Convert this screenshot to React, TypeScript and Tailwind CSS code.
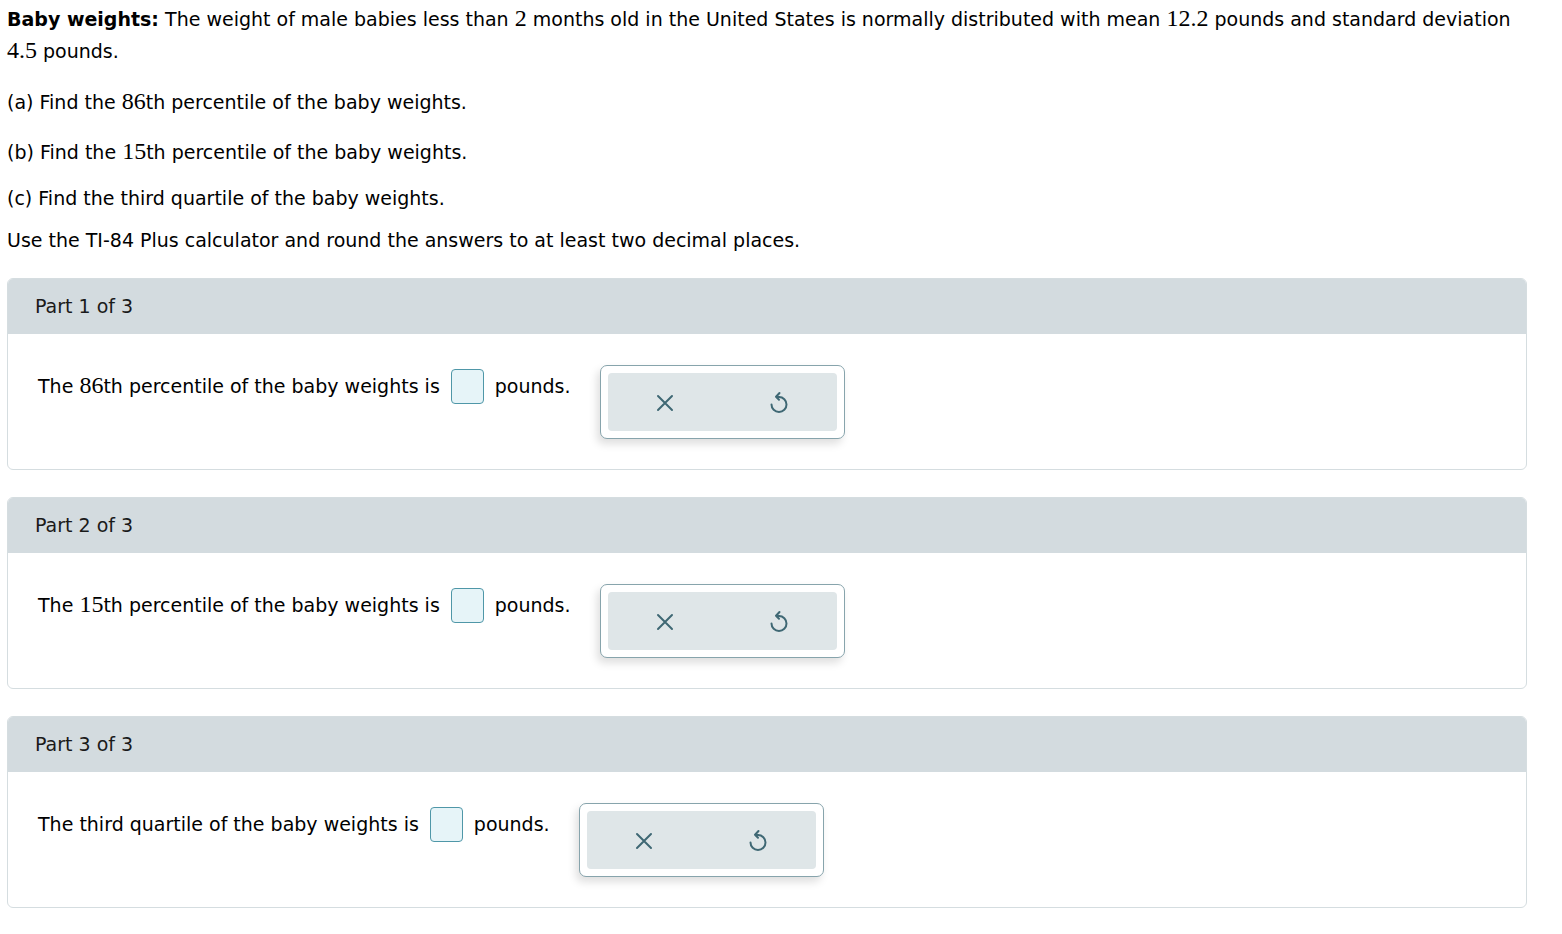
import React from "react";

function Num({ children }: { children: React.ReactNode }) {
  return <span className="font-[family-name:'Liberation_Serif',serif] text-[24px] leading-none">{children}</span>;
}

function XIcon() {
  return (
    <svg width="20" height="20" viewBox="0 0 20 20" fill="none" stroke="#3f6874" strokeWidth="2" strokeLinecap="round">
      <path d="M3 3 L17 17 M17 3 L3 17" />
    </svg>
  );
}

function UndoIcon() {
  return (
    <svg width="22" height="26" viewBox="0 0 22 26" fill="none" stroke="#3f6874" strokeWidth="2" strokeLinecap="round" strokeLinejoin="round">
      <path d="M11 8 A7.5 7.5 0 1 1 3.5 15.5" />
      <path d="M11 8 H8.5 M11.5 4 L8 7.8 L11 10.8" />
    </svg>
  );
}

function Part({ n, lead }: { n: number; lead: React.ReactNode }) {
  return (
    <div className="rounded-[6px] border border-[#d5dde0] overflow-hidden">
      <div className="h-[55px] bg-[#d3dbdf] flex items-center pl-[27px] text-[#1a1a1a]">
        Part {n} of 3
      </div>
      <div className="flex items-start pl-[30px] pt-[31px] pb-[30px]">
        <div className="flex items-center h-[42px] text-black whitespace-nowrap">
          <span>{lead}</span>
          <span className="mx-[11px] w-[33px] h-[35px] rounded-[4px] border-[1.5px] border-[#4f97a8] bg-[#e6f4f8]" />
          <span>pounds.</span>
        </div>
        <div className="ml-[29px] rounded-[7px] border border-[#87a4ac] bg-white p-[7px] shadow-[-3px_5px_8px_rgba(0,0,0,0.13)]">
          <div className="w-[229px] h-[58px] rounded-[4px] bg-[#dfe6e8] flex">
            <div className="flex-1 flex items-center justify-center pt-[2px]">
              <XIcon />
            </div>
            <div className="flex-1 flex items-center justify-center">
              <UndoIcon />
            </div>
          </div>
        </div>
      </div>
    </div>
  );
}

export default function App() {
  return (
    <div className="min-h-[934px] bg-white font-[family-name:'DejaVu_Sans',Verdana,sans-serif] text-[19px] text-black pl-[7px] pt-[3px] pr-[35px]">
      <p className="leading-[32px]">
        <b>Baby weights:</b> The weight of male babies less than <Num>2</Num> months old in the United States is normally
        distributed with mean <Num>12.2</Num> pounds and standard deviation <Num>4.5</Num> pounds.
      </p>
      <p className="leading-[32px] mt-[19px]">
        (a) Find the <Num>86</Num>th percentile of the baby weights.
      </p>
      <p className="leading-[32px] mt-[18px]">
        (b) Find the <Num>15</Num>th percentile of the baby weights.
      </p>
      <p className="leading-[32px] mt-[14px]">(c) Find the third quartile of the baby weights.</p>
      <p className="leading-[32px] mt-[10px]">
        Use the TI-84 Plus calculator and round the answers to at least two decimal places.
      </p>
      <div className="mt-[22px] flex flex-col gap-[27px]">
        <Part n={1} lead={<>The <Num>86</Num>th percentile of the baby weights is</>} />
        <Part n={2} lead={<>The <Num>15</Num>th percentile of the baby weights is</>} />
        <Part n={3} lead={<>The third quartile of the baby weights is</>} />
      </div>
    </div>
  );
}
